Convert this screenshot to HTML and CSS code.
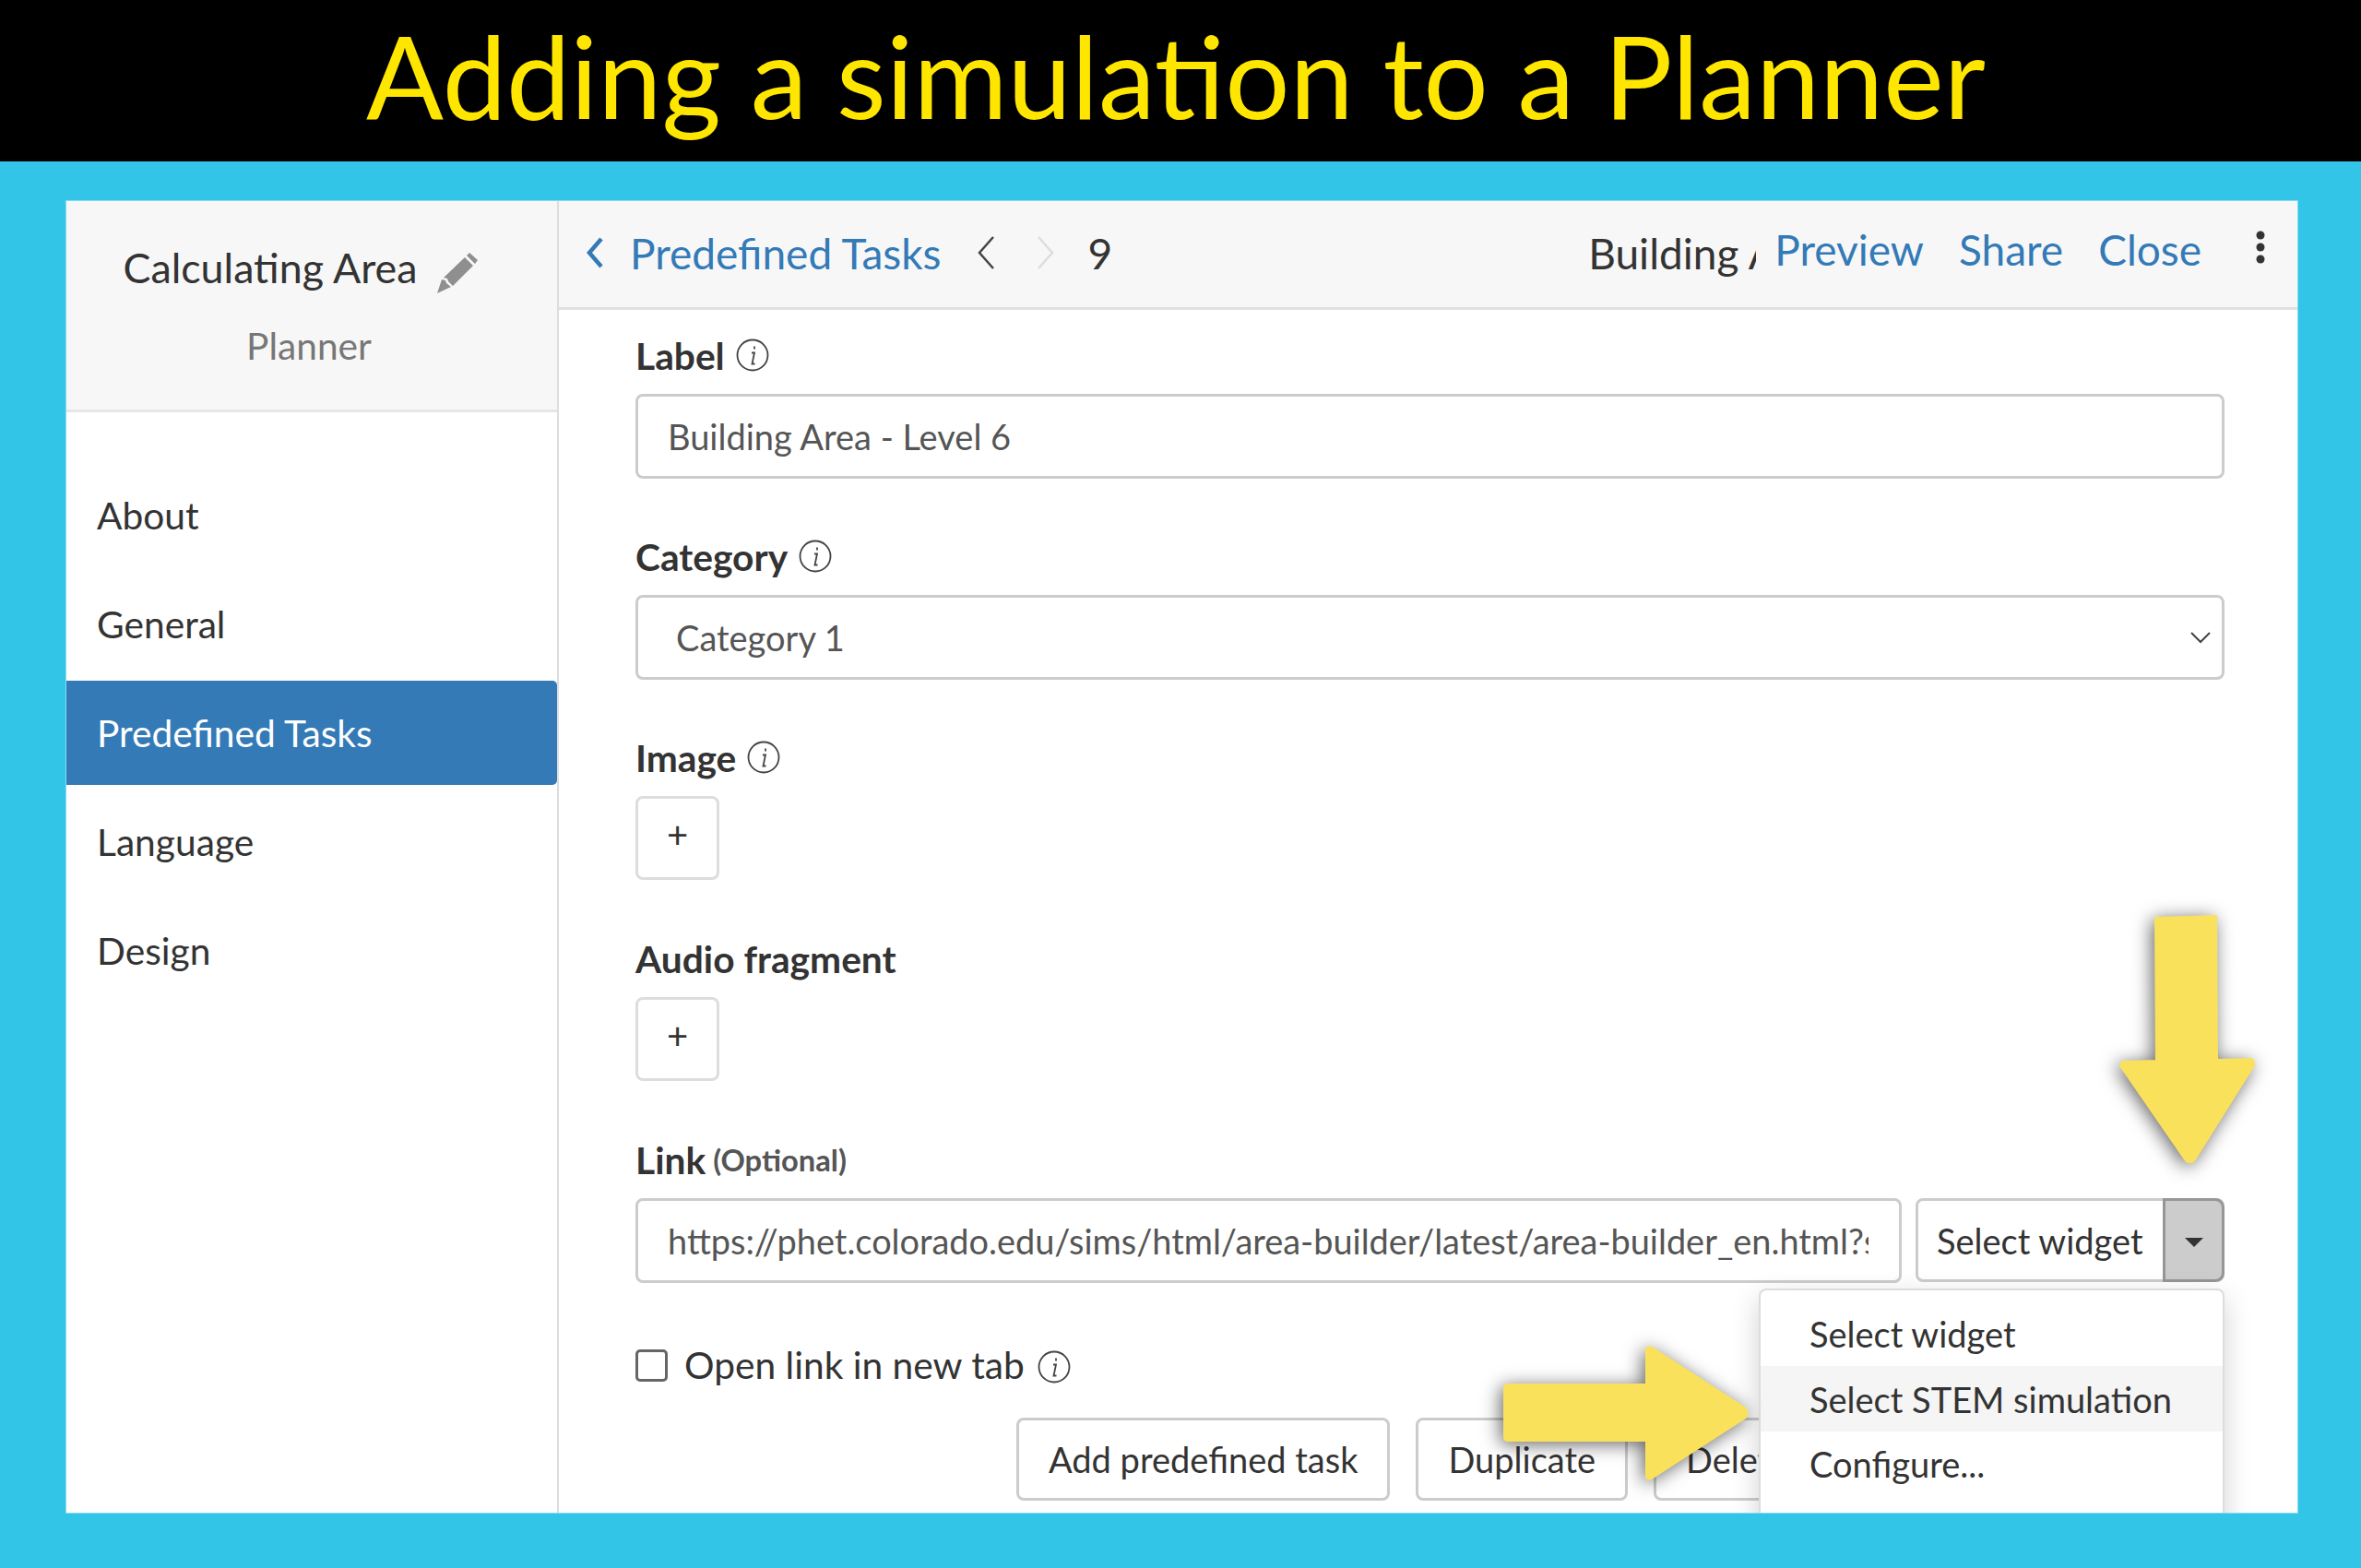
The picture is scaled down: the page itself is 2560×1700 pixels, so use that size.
FILE: index.html
```html
<!DOCTYPE html>
<html lang="en">
<head>
<meta charset="utf-8">
<title>Adding a simulation to a Planner</title>
<link rel="stylesheet" href="styles.css">
</head>
<body>
<header class="banner"><h1>Adding a simulation to a Planner</h1></header>
<main class="stage">
  <div class="window">
    <aside class="sidebar">
      <div class="side-head">
        <div class="side-title"><span>Calculating Area</span>
          <svg class="pencil" viewBox="0 0 44 44"><path d="M35 0 L44 8 L41 12 L32 3 Z M30 5 L39 14 L17 36 L12 31 L11 28 L7 27 Z M5 29 L9 30 L10 33 L15 37 L0 44 Z" fill="#8f8f8f"/></svg>
        </div>
        <div class="side-sub">Planner</div>
      </div>
      <nav class="side-nav">
        <a class="nav-item">About</a>
        <a class="nav-item">General</a>
        <a class="nav-item active">Predefined Tasks</a>
        <a class="nav-item">Language</a>
        <a class="nav-item">Design</a>
      </nav>
    </aside>
    <section class="content">
      <div class="toolbar">
        <svg class="chev back" viewBox="0 0 20 36"><path d="M17 3 L4 18 L17 33" fill="none" stroke="#337ab7" stroke-width="4.5"/></svg>
        <a class="link crumb">Predefined Tasks</a>
        <svg class="chev prev" viewBox="0 0 20 36"><path d="M18 1 L3 18 L18 35" fill="none" stroke="#444" stroke-width="2.5"/></svg>
        <svg class="chev next" viewBox="0 0 20 36"><path d="M2 1 L17 18 L2 35" fill="none" stroke="#ddd" stroke-width="2.5"/></svg>
        <span class="page-no">9</span>
        <span class="task-name">Building Area - Level 6</span>
        <div class="tool-links">
          <a class="link">Preview</a><a class="link">Share</a><a class="link">Close</a>
        </div>
        <svg class="kebab" viewBox="0 0 10 36"><circle cx="5" cy="5" r="4.5"/><circle cx="5" cy="18" r="4.5"/><circle cx="5" cy="31" r="4.5"/></svg>
      </div>
      <form class="form">
        <div class="field">
          <label class="lbl">Label
            <svg class="info" viewBox="0 0 36 36"><circle cx="18" cy="18" r="16.5"/><path d="M20 8.5v3M17 15.5h3l-2.5 12h3"/></svg></label>
          <div class="control">Building Area - Level 6</div>
        </div>
        <div class="field">
          <label class="lbl">Category
            <svg class="info" viewBox="0 0 36 36"><circle cx="18" cy="18" r="16.5"/><path d="M20 8.5v3M17 15.5h3l-2.5 12h3"/></svg></label>
          <div class="control select"><span>Category 1</span>
            <svg class="caret" viewBox="0 0 22 14"><path d="M1 2 L11 12 L21 2" fill="none" stroke="#444" stroke-width="2"/></svg></div>
        </div>
        <div class="field">
          <label class="lbl">Image
            <svg class="info" viewBox="0 0 36 36"><circle cx="18" cy="18" r="16.5"/><path d="M20 8.5v3M17 15.5h3l-2.5 12h3"/></svg></label>
          <div class="add-box">+</div>
        </div>
        <div class="field">
          <label class="lbl">Audio fragment</label>
          <div class="add-box">+</div>
        </div>
        <div class="field link-field">
          <label class="lbl">Link <small>(Optional)</small></label>
          <div class="link-row">
            <div class="control url"><span>https://phet.colorado.edu/sims/html/area-builder/latest/area-builder_en.html?screens=1</span></div>
            <div class="split">
              <span class="split-main">Select widget</span>
              <span class="split-toggle"><i class="tri"></i></span>
            </div>
            <ul class="menu">
              <li>Select widget</li>
              <li class="hover">Select STEM simulation</li>
              <li>Configure...</li>
            </ul>
          </div>
        </div>
        <div class="check-row">
          <span class="check"></span><span class="check-text">Open link in new tab</span>
          <svg class="info" viewBox="0 0 36 36"><circle cx="18" cy="18" r="16.5"/><path d="M20 8.5v3M17 15.5h3l-2.5 12h3"/></svg>
        </div>
        <div class="actions">
          <button type="button" class="btn">Add predefined task</button>
          <button type="button" class="btn">Duplicate</button>
          <button type="button" class="btn">Delete</button>
        </div>
      </form>
    </section>
    <svg class="arrow arrow-down" viewBox="0 0 147 269"><path d="M39 3 L105 1 L106 157 L142 156 Q147 157 146 163 L82 265 Q76 272 71 265 L2 165 Q0 161 4 159 L40 158 Z" fill="#fae15c" stroke="#fae15c" stroke-width="2" stroke-linejoin="round"/></svg>
    <svg class="arrow arrow-right" viewBox="0 0 269 147"><path d="M6 42 L156 42 L156 4 Q160 -1 165 3 L265 68 Q270 74 265 80 L166 144 Q159 149 156 144 L156 105 L6 105 Q2 104 2 100 L2 47 Q2 43 6 42 Z" fill="#fae15c"/></svg>
  </div>
</main>
</body>
</html>
```
FILE: styles.css
```css
* { box-sizing: border-box; }
html, body { margin: 0; height: 1700px; overflow: hidden; }
body { font-family: "Lato", "Liberation Sans", sans-serif; color: #333; background: #32c5e8; font-size: 40.7px; font-variant-ligatures: common-ligatures; }
.banner { height: 175px; background: #000; display: flex; align-items: center; justify-content: center; padding: 0 10px 13px 0; }
.banner h1 { margin: 0; color: #ffe600; font-weight: 400; font-size: 124px; line-height: 1; }
.stage { height: 1525px; padding: 43px 69px 60px 72px; }
.window { position: relative; height: 1422px; display: flex; background: #fff; overflow: hidden; box-shadow: 0 0 0 1px rgba(255,255,255,.4); }
.sidebar { width: 534px; flex: none; border-right: 2px solid #ddd; }
.side-head { height: 229px; background: #f7f7f7; border-bottom: 3px solid #e6e6e6; padding-top: 44px; display: flex; flex-direction: column; align-items: center; }
.side-title { display: flex; align-items: center; gap: 21px; line-height: 56px; margin-right: 25px; font-size: 44.8px; }
.pencil { width: 44px; height: 44px; margin-top: 12px; }
.side-sub { margin-top: 32px; color: #777; line-height: 50px; margin-right: 6px; }
.side-nav { padding-top: 55px; display: flex; flex-direction: column; gap: 5px; }
.nav-item { height: 113px; display: flex; align-items: center; padding-left: 33px; }
.nav-item.active { background: #337ab7; color: #fff; border-radius: 0 5px 5px 0; }
.content { flex: 1; min-width: 0; }
.toolbar { height: 118px; background: #f7f7f7; border-bottom: 3px solid #e0e0e0; display: flex; align-items: center; padding: 0 0 3px 29px; font-size: 46px; }
.link { color: #337ab7; }
.chev { height: 36px; width: 20px; flex: none; }
.crumb { margin-left: 28px; }
.prev { margin-left: 38px; }
.next { margin-left: 45px; }
.page-no { margin-left: 36px; }
.task-name { margin-left: 516px; width: 182px; overflow: hidden; white-space: nowrap; flex: none; }
.tool-links { margin-left: 20px; display: flex; gap: 38px; margin-top: -8px; }
.kebab { width: 10px; height: 36px; margin-left: 59px; margin-top: -13px; fill: #333; }
.form { padding: 29px 79px 0 83px; }
.field { margin-bottom: 65px; }
.lbl { display: flex; align-items: center; gap: 12px; height: 40px; margin-bottom: 22px; font-weight: 700; }
.lbl small { font-size: 32.7px; color: #555; margin-left: -4px; }
.info { width: 36px; height: 36px; fill: none; stroke: #444; stroke-width: 1.8; flex: none; }
.control { height: 92px; margin-bottom: -1px; border: 3px solid #ccc; border-radius: 8px; display: flex; align-items: center; padding: 0 33px 0 32px; color: #555; font-size: 38px; }
.select { justify-content: space-between; padding: 0 12px 0 41px; }
.caret { width: 22px; height: 14px; }
.add-box { width: 91px; height: 91px; border: 3px solid #ddd; border-radius: 8px; display: flex; align-items: center; justify-content: center; font-size: 40px; padding-bottom: 8px; }
.link-field { margin-bottom: 72px; }
.link-row { position: relative; display: flex; gap: 15px; align-items: flex-start; }
.url { flex: 1; min-width: 0; font-size: 37.9px; }
.url span { display: block; overflow: hidden; white-space: nowrap; }
.split { width: 335px; flex: none; height: 91px; display: flex; border: 3px solid #ccc; border-radius: 8px; font-size: 38px; }
.split-main { flex: 1; display: flex; align-items: center; padding-left: 20px; }
.split-toggle { width: 67px; margin: -3px -3px -3px 0; background: #ccc; border: 3px solid #969696; border-radius: 0 10px 10px 0; display: flex; align-items: center; justify-content: center; }
.tri { width: 0; height: 0; border: 10px solid transparent; border-top: 10px solid #333; border-bottom: 0; margin-top: 4px; }
.menu { position: absolute; top: 98px; right: 0; width: 505px; height: 300px; margin: 0; padding: 12px 0 0; list-style: none; background: #fff; border: 2px solid #ddd; border-radius: 8px; box-shadow: 0 10px 30px rgba(0,0,0,.18); z-index: 2; font-size: 38px; }
.menu li { height: 70px; display: flex; align-items: center; padding-left: 53px; }
.menu .hover { background: #f5f5f5; height: 71px; }
.check-row { display: flex; align-items: center; height: 36px; gap: 18px; }
.check { width: 35px; height: 35px; border: 3px solid #666; border-radius: 5px; flex: none; }
.check-text { margin-top: -2px; }
.check-row .info { margin-left: -4px; margin-top: 4px; }
.actions { margin-top: 39px; padding-left: 413px; display: flex; gap: 28px; }
.btn { font: inherit; font-size: 38px; color: #333; background: #fff; height: 90px; border: 3px solid #ccc; border-radius: 8px; padding: 0 32px; white-space: nowrap; }
.arrow { position: absolute; z-index: 3; filter: drop-shadow(-3px 3px 10px rgba(0,0,0,.6)); }
.arrow-down { left: 2226px; top: 774px; width: 147px; height: 269px; }
.arrow-right { left: 1556px; top: 1240px; width: 269px; height: 147px; }
```
